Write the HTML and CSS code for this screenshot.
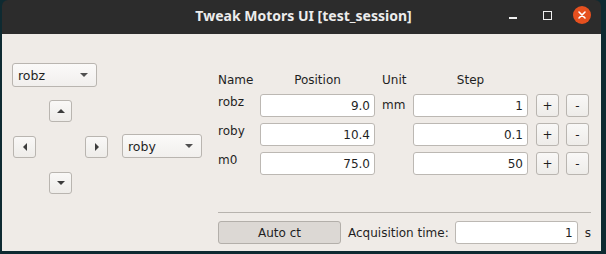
FILE: index.html
```html
<!DOCTYPE html>
<html lang="en">
<head>
    <meta charset="UTF-8">
    <meta name="viewport" content="width=device-width, initial-scale=1.0">
    <title>Tweak Motors UI [test_session]</title>
    <link rel="stylesheet" href="styles.css">
</head>
<body>
    <div class="window">
        <div class="titlebar">
            <span class="title">Tweak Motors UI [test_session]</span>
            <div class="controls">
                <span class="ctl-min"></span>
                <span class="ctl-max"></span>
                <span class="ctl-close">
                    <svg width="18" height="18" viewBox="0 0 18 18">
                        <path d="M6 6 L12 12 M12 6 L6 12" stroke="#fff" stroke-width="1.6" stroke-linecap="round"/>
                    </svg>
                </span>
            </div>
        </div>

        <div class="content">
            <!-- Achsenwahl und Pfeiltasten -->
            <div class="panel-left">
                <div class="combo combo-top">
                    <span>robz</span><span class="caret"></span>
                </div>
                <div class="pad-row">
                    <div class="pad">
                        <button class="arrow btn-up"><span class="tri tri-up"></span></button>
                        <button class="arrow btn-left"><span class="tri tri-left"></span></button>
                        <button class="arrow btn-right"><span class="tri tri-right"></span></button>
                        <button class="arrow btn-down"><span class="tri tri-down"></span></button>
                    </div>
                    <div class="combo combo-side">
                        <span>roby</span><span class="caret"></span>
                    </div>
                </div>
            </div>

            <div class="panel-right">
                <div class="motors">
                    <span class="head">Name</span>
                    <span class="head center">Position</span>
                    <span class="head unit-head">Unit</span>
                    <span class="head center">Step</span>
                    <span></span>
                    <span></span>

                    <span class="name">robz</span>
                    <input type="text" value="9.0">
                    <span class="unit">mm</span>
                    <input type="text" value="1">
                    <button class="step">+</button>
                    <button class="step">-</button>

                    <span class="name">roby</span>
                    <input type="text" value="10.4">
                    <span class="unit"></span>
                    <input type="text" value="0.1">
                    <button class="step">+</button>
                    <button class="step">-</button>

                    <span class="name">m0</span>
                    <input type="text" value="75.0">
                    <span class="unit"></span>
                    <input type="text" value="50">
                    <button class="step">+</button>
                    <button class="step">-</button>
                </div>

                <div class="sep"></div>

                <div class="acq">
                    <button class="auto">Auto ct</button>
                    <span class="acq-label">Acquisition time:</span>
                    <input type="text" class="acq-input" value="1">
                    <span class="acq-unit">s</span>
                </div>
            </div>
        </div>
    </div>
</body>
</html>
```

FILE: styles.css
```css
body {
    margin: 0;
    background-color: #0e2a31;
    font-family: "DejaVu Sans", sans-serif;
    font-size: 12px;
    color: #1f1f1f;
}

.window {
    margin-left: 2px;
    width: 599px;
    height: 251px;
    display: flex;
    flex-direction: column;
}

.titlebar {
    height: 34px;
    background-color: #2c2c2c;
    border-radius: 6px 6px 0 0;
    display: flex;
    align-items: center;
    justify-content: center;
    position: relative;
}

.title {
    font-family: "Noto Sans", sans-serif;
    font-weight: 700;
    font-size: 14px;
    color: #ececec;
    margin-left: 4px;
    margin-top: -3px;
}

.controls {
    position: absolute;
    right: 10px;
    top: 6px;
    display: flex;
    align-items: center;
}

.ctl-min {
    width: 8px;
    height: 2px;
    background: #f0f0f0;
    margin-top: 6px;
}

.ctl-max {
    width: 7px;
    height: 7px;
    border: 1.5px solid #f0f0f0;
    margin-left: 26px;
}

.ctl-close {
    width: 18px;
    height: 18px;
    border-radius: 50%;
    background-color: #e6501f;
    margin-left: 21px;
    display: flex;
}

.content {
    flex: 1;
    background-color: #efebe7;
    display: flex;
}

/* linke Seite */
.panel-left {
    width: 206px;
    padding: 29px 0 0 10px;
}

.combo {
    height: 24px;
    box-sizing: border-box;
    border: 1px solid #b9b5b0;
    border-radius: 3px;
    background: linear-gradient(#fbfaf9, #f1efed);
    display: flex;
    align-items: center;
    justify-content: space-between;
    padding: 0 8px 0 5px;
    font-size: 12.5px;
}

.combo-top {
    width: 85px;
}

.combo-side {
    width: 80px;
    margin-top: -2px;
}

.caret {
    width: 0;
    height: 0;
    border-left: 4px solid transparent;
    border-right: 4px solid transparent;
    border-top: 4px solid #505050;
}

.pad-row {
    display: flex;
    align-items: center;
    margin-top: 13px;
    margin-left: 1px;
}

.pad {
    display: grid;
    grid-template-columns: 36px 36px 23px;
    grid-template-rows: 36px 36px 22px;
    margin-right: 14px;
}

.arrow {
    width: 23px;
    height: 22px;
    padding: 0;
    border: 1px solid #b9b5b0;
    border-radius: 3px;
    background: linear-gradient(#f9f8f7, #eeece9);
    display: flex;
    align-items: center;
    justify-content: center;
}

.btn-up { grid-column: 2; grid-row: 1; }
.btn-left { grid-column: 1; grid-row: 2; }
.btn-right { grid-column: 3; grid-row: 2; }
.btn-down { grid-column: 2; grid-row: 3; }

.tri {
    width: 0;
    height: 0;
}

.tri-up {
    border-left: 4px solid transparent;
    border-right: 4px solid transparent;
    border-bottom: 4px solid #3c3c3c;
}

.tri-down {
    border-left: 4px solid transparent;
    border-right: 4px solid transparent;
    border-top: 4px solid #3c3c3c;
}

.tri-left {
    border-top: 4px solid transparent;
    border-bottom: 4px solid transparent;
    border-right: 4px solid #3c3c3c;
}

.tri-right {
    border-top: 4px solid transparent;
    border-bottom: 4px solid transparent;
    border-left: 4px solid #3c3c3c;
}

/* rechte Seite */
.panel-right {
    width: 373px;
    padding-top: 38px;
}

.motors {
    display: grid;
    grid-template-columns: 42px 115px 38px 115px 31px 30px;
    grid-template-rows: 16px 23px 23px 23px;
    row-gap: 6px;
}

.head {
    line-height: 16px;
}

.unit-head {
    padding-left: 7px;
}

.center {
    text-align: center;
}

.name {
    line-height: 14px;
    padding-top: 1px;
}

.unit {
    line-height: 23px;
    padding-left: 7px;
}

input {
    height: 23px;
    box-sizing: border-box;
    border: 1px solid #bcb8b3;
    border-radius: 3px;
    background: #fff;
    text-align: right;
    padding: 0 4px 0 0;
    margin: 0;
    min-width: 0;
    font-family: "DejaVu Sans", sans-serif;
    font-size: 12px;
    color: #1f1f1f;
}

.step {
    justify-self: end;
    width: 23px;
    height: 23px;
    padding: 0;
    border: 1px solid #b9b5b0;
    border-radius: 3px;
    background: linear-gradient(#f9f8f7, #eeece9);
    font-family: "DejaVu Sans", sans-serif;
    font-size: 12px;
    color: #1f1f1f;
}

.sep {
    height: 1px;
    background-color: #b7b3ae;
    margin-top: 37px;
}

.acq {
    display: flex;
    align-items: center;
    margin-top: 8px;
    height: 23px;
    white-space: nowrap;
}

.auto {
    flex: none;
    width: 123px;
    height: 23px;
    padding: 0;
    border: 1px solid #b3afaa;
    border-radius: 3px;
    background-color: #dcd8d4;
    font-family: "DejaVu Sans", sans-serif;
    font-size: 12px;
    color: #1f1f1f;
}

.acq-label {
    margin-left: 7px;
}

.acq-input {
    flex: none;
    width: 123px;
    margin-left: 6px;
}

.acq-unit {
    margin-left: 7px;
}
```
